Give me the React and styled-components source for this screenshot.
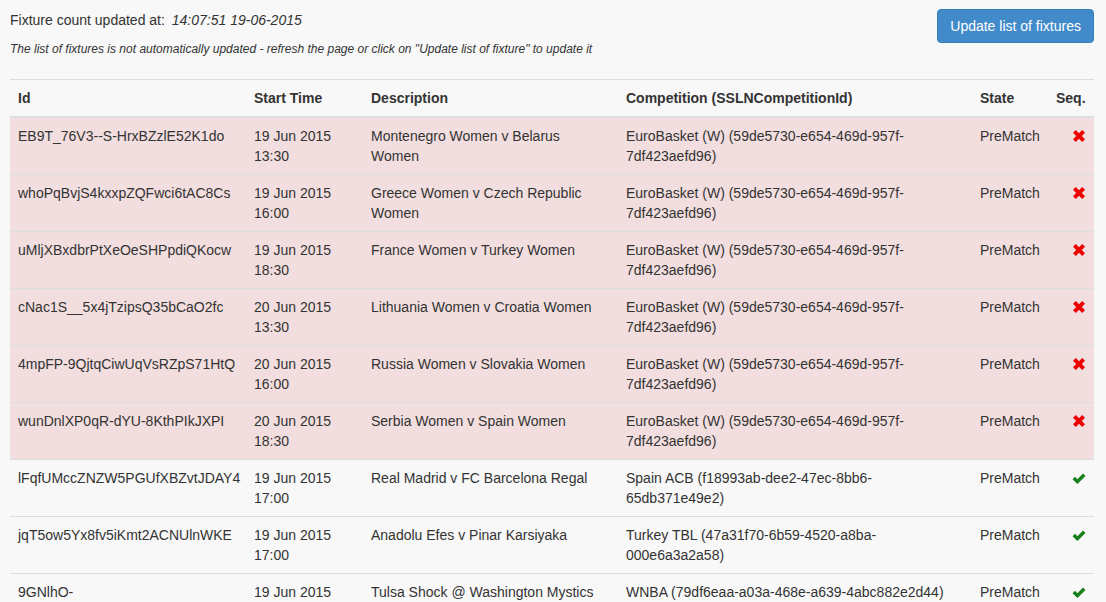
import styled, { createGlobalStyle } from "styled-components";

const fixtures = [
  { id: "EB9T_76V3--S-HrxBZzlE52K1do", date: "19 Jun 2015", time: "13:30", desc: "Montenegro Women v Belarus Women", comp: "EuroBasket (W) (59de5730-e654-469d-957f-7df423aefd96)", ok: false },
  { id: "whoPqBvjS4kxxpZQFwci6tAC8Cs", date: "19 Jun 2015", time: "16:00", desc: "Greece Women v Czech Republic Women", comp: "EuroBasket (W) (59de5730-e654-469d-957f-7df423aefd96)", ok: false },
  { id: "uMljXBxdbrPtXeOeSHPpdiQKocw", date: "19 Jun 2015", time: "18:30", desc: "France Women v Turkey Women", comp: "EuroBasket (W) (59de5730-e654-469d-957f-7df423aefd96)", ok: false },
  { id: "cNac1S__5x4jTzipsQ35bCaO2fc", date: "20 Jun 2015", time: "13:30", desc: "Lithuania Women v Croatia Women", comp: "EuroBasket (W) (59de5730-e654-469d-957f-7df423aefd96)", ok: false },
  { id: "4mpFP-9QjtqCiwUqVsRZpS71HtQ", date: "20 Jun 2015", time: "16:00", desc: "Russia Women v Slovakia Women", comp: "EuroBasket (W) (59de5730-e654-469d-957f-7df423aefd96)", ok: false },
  { id: "wunDnlXP0qR-dYU-8KthPIkJXPI", date: "20 Jun 2015", time: "18:30", desc: "Serbia Women v Spain Women", comp: "EuroBasket (W) (59de5730-e654-469d-957f-7df423aefd96)", ok: false },
  { id: "lFqfUMccZNZW5PGUfXBZvtJDAY4", date: "19 Jun 2015", time: "17:00", desc: "Real Madrid v FC Barcelona Regal", comp: "Spain ACB (f18993ab-dee2-47ec-8bb6-65db371e49e2)", ok: true },
  { id: "jqT5ow5Yx8fv5iKmt2ACNUlnWKE", date: "19 Jun 2015", time: "17:00", desc: "Anadolu Efes v Pinar Karsiyaka", comp: "Turkey TBL (47a31f70-6b59-4520-a8ba-000e6a3a2a58)", ok: true },
  { id: "9GNlhO-WmWqZXM8bHKpDwYzQNwMW", date: "19 Jun 2015", time: "17:00", desc: "Tulsa Shock @ Washington Mystics", comp: "WNBA (79df6eaa-a03a-468e-a639-4abc882e2d44)", ok: true },
];

const GlobalStyle = createGlobalStyle`
  html {
    overflow: hidden;
  }
  body {
    margin: 0;
    background: #f8f8f8;
    color: #333;
    font-family: "Liberation Sans", Arial, sans-serif;
    font-size: 14px;
    line-height: 20px;
  }
`;

const Page = styled.div`
  padding: 0 12px 0 10px;
`;

const TopBar = styled.div`
  display: flex;
  justify-content: space-between;
  align-items: flex-start;
  padding-top: 9px;
  margin-bottom: 20px;
`;

const Info = styled.div`
  display: flex;
  flex-direction: column;
`;

const Updated = styled.p`
  margin: 0;
  padding-top: 1px;
`;

const Stamp = styled.em`
  margin-left: 3px;
`;

const Note = styled.p`
  margin: 9px 0 0;
  font-size: 12px;
  font-style: italic;
`;

const Button = styled.button`
  height: 34px;
  padding: 6px 12px;
  border: 1px solid #357ebd;
  border-radius: 4px;
  background: #428bca;
  color: #fff;
  font-family: inherit;
  font-size: 14px;
  line-height: 20px;
  cursor: pointer;
`;

const Table = styled.table`
  width: 100%;
  table-layout: fixed;
  border-collapse: collapse;
  border-spacing: 0;
`;

const Th = styled.th`
  width: ${(p) => p.$w}px;
  padding: 8px;
  border-top: 1px solid #ddd;
  border-bottom: 2px solid #ddd;
  text-align: left;
  vertical-align: bottom;
  font-weight: bold;
`;

const Row = styled.tr`
  background: ${(p) => (p.$danger ? "#f2dede" : "transparent")};
`;

const Td = styled.td`
  padding: 8px;
  border-top: 1px solid #ddd;
  vertical-align: top;
  text-align: ${(p) => (p.$right ? "right" : "left")};
`;

const Icon = styled.svg`
  display: inline-block;
  width: 14px;
  height: 14px;
  margin-top: 3px;
  vertical-align: top;
`;

function Cross() {
  return (
    <Icon viewBox="0 0 14 14">
      <path d="M1 3.8 3.8 1 7 4.2 10.2 1 13 3.8 9.8 7 13 10.2 10.2 13 7 9.8 3.8 13 1 10.2 4.2 7Z" fill="#e00" />
    </Icon>
  );
}

function Check() {
  return (
    <Icon viewBox="0 0 14 14">
      <path d="M0.5 8.2 3 5.8 5.4 8.2 11 2.6 13.5 5 5.4 13Z" fill="#17801a" />
    </Icon>
  );
}

export default function App() {
  return (
    <Page>
      <GlobalStyle />
      <TopBar>
        <Info>
          <Updated>
            Fixture count updated at: <Stamp>14:07:51 19-06-2015</Stamp>
          </Updated>
          <Note>
            The list of fixtures is not automatically updated - refresh the page or click on "Update list of fixture" to update it
          </Note>
        </Info>
        <Button>Update list of fixtures</Button>
      </TopBar>
      <Table>
        <thead>
          <tr>
            <Th $w={220}>Id</Th>
            <Th $w={101}>Start Time</Th>
            <Th $w={239}>Description</Th>
            <Th $w={338}>Competition (SSLNCompetitionId)</Th>
            <Th $w={60}>State</Th>
            <Th $w={30}>Seq.</Th>
          </tr>
        </thead>
        <tbody>
          {fixtures.map((f) => (
            <Row key={f.id} $danger={!f.ok}>
              <Td>{f.id}</Td>
              <Td>
                {f.date}
                <br />
                {f.time}
              </Td>
              <Td>{f.desc}</Td>
              <Td>{f.comp}</Td>
              <Td>PreMatch</Td>
              <Td $right>{f.ok ? <Check /> : <Cross />}</Td>
            </Row>
          ))}
        </tbody>
      </Table>
    </Page>
  );
}
